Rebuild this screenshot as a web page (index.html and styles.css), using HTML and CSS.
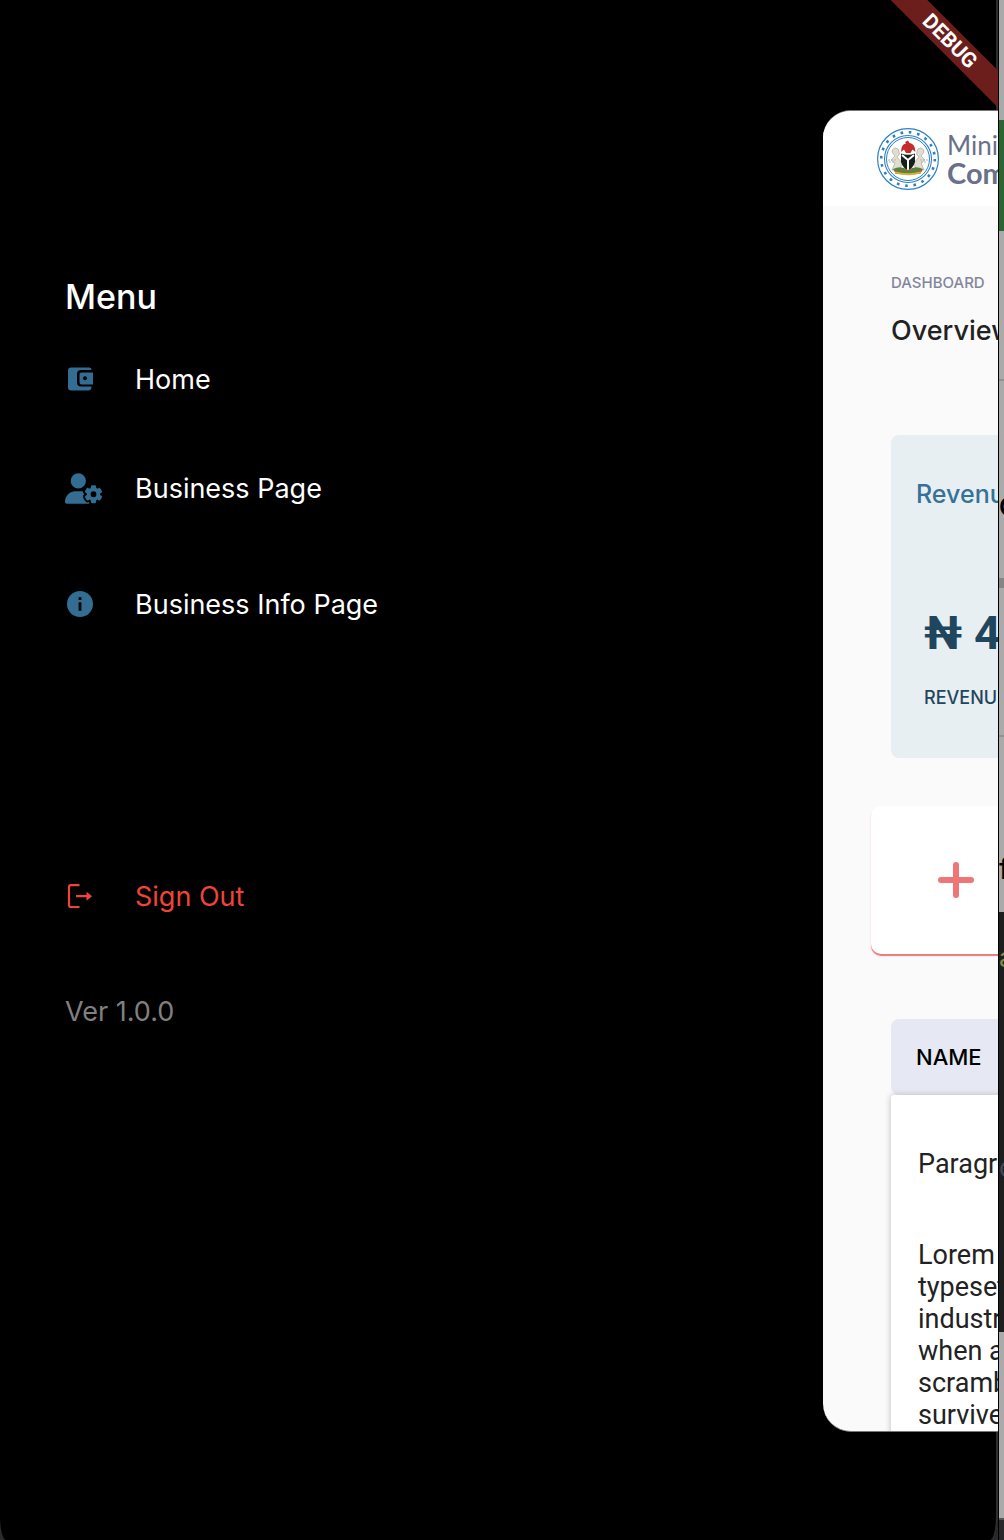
FILE: index.html
```html
<!DOCTYPE html>
<html lang="en">
<head>
<meta charset="utf-8">
<meta name="viewport" content="width=device-width, initial-scale=1">
<title>Menu</title>
<link rel="stylesheet" href="styles.css">
</head>
<body>
<div class="desktop">
  <div class="app">
    <aside class="drawer">
      <h1 class="drawer-title">Menu</h1>
      <nav class="menu">
        <a class="item" href="#home">
          <span class="icon"><svg width="30" height="30" viewBox="0 0 30 30"><path fill="currentColor" d="M6 3.500H24.500Q26.500 3.500 26.500 6H16Q12 6 12 10V18.500Q12 22.500 16 22.500H26.500Q26.500 26.500 23.500 26.500H6Q3 26.500 3 23.500V6.500Q3 3.500 6 3.500Z"/><path fill="currentColor" fill-rule="evenodd" d="M16.500 8.500H28V20.500H16.500Q14.500 20.500 14.500 18.500V10.500Q14.500 8.500 16.500 8.500ZM20 12.300a2 2 0 1 0 0.010 0Z"/></svg></span>
          <span>Home</span>
        </a>
        <a class="item" href="#business">
          <span class="icon"><svg width="38" height="31" viewBox="0 0 640 512"><path fill="currentColor" d="M224 0a128 128 0 1 1 0 256A128 128 0 1 1 224 0zM178.300 304h91.400c11.800 0 23.400 1.200 34.500 3.300c-2.100 18.500 7.400 35.600 21.800 44.800c-16.600 10.600-26.700 31.600-20 53.300c4 12.900 9.400 25.500 16.400 37.600s15.200 23.100 24.400 33c15.700 16.900 39.600 18.400 57.200 8.700v.9c0 9.200 2.700 18.500 7.900 26.300H29.700C13.300 512 0 498.700 0 482.300C0 383.800 79.800 304 178.300 304zM436 218.200c0-7 4.500-13.300 11.300-14.800c10.500-2.400 21.500-3.700 32.700-3.700s22.200 1.300 32.700 3.700c6.800 1.500 11.300 7.800 11.300 14.800v30.600c7.900 3.400 15.400 7.700 22.300 12.800l24.900-14.300c6.100-3.500 13.700-2.700 18.500 2.400c7.600 8.100 14.300 17.200 20.100 27.200s10.300 20.400 13.500 31c2.100 6.700-1.100 13.700-7.200 17.200l-25 14.400c.4 4 .7 8.100 .7 12.300s-.2 8.200-.7 12.300l25 14.400c6.100 3.500 9.200 10.500 7.200 17.200c-3.300 10.600-7.800 21-13.500 31s-12.500 19.100-20.100 27.200c-4.800 5.100-12.500 5.900-18.500 2.400l-24.900-14.300c-6.900 5.100-14.300 9.400-22.300 12.800l0 30.600c0 7-4.500 13.300-11.300 14.800c-10.500 2.400-21.500 3.700-32.700 3.700s-22.200-1.300-32.700-3.700c-6.800-1.500-11.300-7.800-11.300-14.800V454.800c-8-3.400-15.600-7.700-22.500-12.900l-24.700 14.300c-6.100 3.500-13.700 2.700-18.500-2.400c-7.600-8.100-14.300-17.200-20.100-27.200s-10.300-20.400-13.500-31c-2.100-6.700 1.100-13.700 7.200-17.200l24.800-14.300c-.4-4.100-.7-8.200-.7-12.400s.2-8.300 .7-12.400L343.800 325c-6.100-3.500-9.200-10.500-7.200-17.200c3.300-10.600 7.700-21 13.500-31s12.500-19.100 20.100-27.200c4.800-5.100 12.400-5.900 18.500-2.400l24.800 14.300c6.900-5.100 14.500-9.400 22.500-12.900V218.200zm92.100 133.500a48.100 48.100 0 1 0 -96.100 0 48.100 48.100 0 1 0 96.100 0z"/></svg></span>
          <span>Business Page</span>
        </a>
        <a class="item info" href="#business-info">
          <span class="icon"><svg width="30" height="30" viewBox="0 0 30 30"><circle cx="15" cy="15" r="13" fill="currentColor"/><path stroke="#000" stroke-width="2.800" d="M15 8.200v2.800M15 13.200v8.600"/></svg></span>
          <span>Business Info Page</span>
        </a>
      </nav>
      <button class="item signout" type="button">
        <span class="icon"><svg width="30" height="30" viewBox="0 0 30 30"><path fill="none" stroke="currentColor" stroke-width="2.200" d="M14.500 4.200H6Q4 4.200 4 6.200V24Q4 26 6 26H14.500M11 15.200H22.500"/><path fill="currentColor" d="M21.500 10.700L27 15.200L21.500 19.700Z"/></svg></span>
        <span>Sign Out</span>
      </button>
      <p class="version">Ver 1.0.0</p>
    </aside>

    <section class="preview">
      <header class="brand">
        <svg width="64" height="64" viewBox="0 0 64 64">
          <g fill="none" stroke="#2f80c2">
            <circle cx="32" cy="32" r="30.400" stroke-width="1.200"/>
            <circle cx="32" cy="32" r="26.800" stroke-width="2.600" stroke-dasharray="2.600 5.820"/>
            <circle cx="32" cy="32" r="23.500" stroke-width="1.100"/>
            <circle cx="32" cy="32" r="21.500" stroke-width="1"/>
          </g>
          <path fill="#c42c2b" d="M25 25Q25 17 30 16.500L29 15L32 13.500L33.500 16Q39 16.500 39.500 25L36.500 22.500L34.500 26H30L28 22.500Z"/>
          <path fill="#e0ded2" stroke="#aaa797" stroke-width=".7" d="M16 25Q17 19 22 22L23.500 27L21 30L26 36L24 43H16L19 36L15 33L19 29ZM48 25Q47 19 42 22L40.500 27L43 30L38 36L40 43H48L45 36L49 33L45 29Z"/>
          <path stroke="#b7b4a7" stroke-width="1" stroke-dasharray="2 1" d="M12 33H20M44 33H52M13 35H19M45 35H51"/>
          <path fill="#17211b" d="M25 26.500Q32 29 39 26.500V35Q37 41 32 44Q27 41 25 35Z"/>
          <path fill="none" stroke="#fff" stroke-width="2" d="M26 28L32 33L38 28M32 33V43"/>
          <path fill="#4d8a3d" d="M17 42Q25 38 32 43Q39 38 47 42L44 47H20Z"/>
          <path stroke="#d7493a" stroke-width="2" stroke-dasharray="2 3" d="M19 43.500H46"/>
          <path fill="none" stroke="#d6ad3b" stroke-width="2" d="M19 45.500Q32 49 45 45.500"/>
        </svg>
        <div class="brand-name"><span>Ministry of</span><strong>Communications</strong></div>
      </header>
      <main class="content">
        <p class="crumb">DASHBOARD</p>
        <h2 class="heading">Overview</h2>
        <article class="revenue">
          <h3 class="revenue-title">Revenue</h3>
          <p class="amount">₦ 400</p>
          <p class="caption">REVENUE</p>
        </article>
        <button class="add" type="button" aria-label="Add">
          <svg width="36" height="36" viewBox="0 0 36 36"><path stroke="#ee7676" stroke-width="6" stroke-linecap="round" d="M18 3V33M3 18H33"/></svg>
        </button>
        <table class="records">
          <thead><tr><th>NAME</th></tr></thead>
          <tbody><tr><td>
            <p>Paragraph</p>
            <p>Lorem ipsum<br>typesetting<br>industry<br>when an<br>scrambled<br>survived</p>
          </td></tr></tbody>
        </table>
      </main>
    </section>
    <div class="debug">DEBUG</div>
  </div>

  <div class="behind">
    <div class="pane sky"></div>
    <div class="pane green"></div>
    <div class="pane top"></div>
    <div class="pane query">C</div>
    <div class="pane divider"></div>
    <div class="pane mid"></div>
    <div class="pane label">f</div>
    <div class="pane code"><span class="olive">a</span><span class="slate">o</span></div>
    <div class="pane lower"></div>
    <div class="pane foot"></div>
  </div>
</div>
</body>
</html>
```

FILE: styles.css
```css
* { box-sizing: border-box; }
body {
  margin: 0;
  background: #2b2b2d;
  font-family: Inter, "Liberation Sans", sans-serif;
}
h1, h2, h3, p { margin: 0; font-weight: 500; }
a { color: inherit; text-decoration: none; }
button { border: 0; background: none; font: inherit; cursor: pointer; }
svg { display: block; flex: none; }

.desktop {
  display: grid;
  grid-template-columns: 1fr 6px;
  height: 100vh;
  min-height: 1200px;
}
.app {
  position: relative;
  display: grid;
  grid-template-columns: 1fr 175px;
  overflow: hidden;
  background: #000;
  box-shadow: inset -2px 0 #2e2e2e;
  border-radius: 0 0 6px 6px / 0 0 24px 24px;
}

/* Drawer */
.drawer { padding: 273px 24px 24px 65px; color: #fff; }
.drawer-title { margin-bottom: 34px; font-size: 34px; line-height: 48px; }
.menu { display: grid; gap: 61px; }
.item {
  display: flex;
  align-items: center;
  height: 48px;
  padding: 0;
  font-size: 27px;
}
.info { margin-top: 7px; }
.icon { width: 70px; color: #336d92; }
.signout { margin-top: 244px; color: #f04438; }
.signout .icon { color: inherit; }
.version { margin-top: 68px; color: #808080; font-size: 27px; line-height: 48px; font-weight: 400; }

/* Page tucked behind the drawer */
.preview {
  display: flex;
  flex-direction: column;
  min-width: 0;
  min-height: 0;
  margin: 110px 0 108px;
  overflow: hidden;
  border-top: 1px solid #777;
  border-bottom: 1px solid #777;
  border-radius: 28px 0 0 28px;
  background: #fafafa;
  white-space: nowrap;
}
.brand {
  display: flex;
  flex: none;
  align-items: center;
  gap: 7px;
  height: 95px;
  padding-left: 53px;
  background: #fff;
  color: #697089;
  font-family: Lato, sans-serif;
}
.brand-name { display: grid; font-size: 26px; line-height: 28px; }
.brand-name strong { font-size: 29px; }
.content { flex: none; padding: 65px 0 0 68px; }
.crumb { color: #83869a; font-size: 15px; line-height: 24px; }
.heading { margin-top: 16px; color: #222; font-size: 27px; line-height: 40px; }
.revenue {
  width: 400px;
  height: 323px;
  margin-top: 84px;
  padding: 43px 25px;
  border-radius: 8px;
  background: #e8eff3;
  color: #1f465c;
}
.revenue-title { color: #367297; font-size: 25px; line-height: 32px; }
.amount {
  margin: 95px 0 0 8px;
  font: 700 47px/56px Roboto, sans-serif;
}
.caption { margin: 25px 0 0 8px; font-size: 18px; line-height: 24px; }
.add {
  display: block;
  width: 400px;
  height: 148px;
  margin: 48px 0 0 -20px;
  padding: 0 0 0 67px;
  border-radius: 10px;
  background: #fff;
  box-shadow: 0 2px 1px #ee7676;
}
.records {
  width: 400px;
  margin-top: 65px;
  border-collapse: collapse;
  color: #222;
}
.records th {
  height: 76px;
  padding: 0 25px;
  border-radius: 8px;
  background: #e6e9f3;
  color: #000;
  font-size: 22px;
  font-weight: 500;
  text-align: left;
}
.records td {
  padding: 53px 27px;
  border-radius: 3px;
  background: #fff;
  box-shadow: 0 0 6px #bbb;
  font: 27px/32px Roboto, sans-serif;
}
.records td p { font-weight: 400; }
.records td p + p { margin-top: 59px; }

/* Corner ribbon */
.debug {
  position: absolute;
  top: 28px;
  right: -52px;
  width: 200px;
  transform: rotate(45deg);
  background: #6b1e1b;
  color: #fff;
  font: 700 21px/26px Roboto, sans-serif;
  text-align: center;
}

/* Sliver of the window behind */
.behind {
  display: flex;
  flex-direction: column;
  overflow: hidden;
  border-left: 1px solid #000;
  background: #aaa;
}
.pane { flex: none; overflow: hidden; }
.sky { height: 120px; background: #a9a9a9; }
.green { height: 111px; background: #2b6531; }
.top { height: 150px; border-bottom: 2px solid #919191; }
.query { height: 197px; padding-top: 110px; font-size: 26px; line-height: 32px; font-weight: 600; }
.divider { height: 10px; background: #858585; }
.mid { height: 149px; border-bottom: 2px solid #919191; }
.label { height: 175px; padding-top: 116px; font-size: 28px; line-height: 32px; font-weight: 500; }
.code {
  display: grid;
  align-content: start;
  gap: 178px;
  height: 420px;
  padding-top: 30px;
  background: #1d1f1e;
  font-size: 26px;
  line-height: 32px;
}
.olive { color: #7f8c4c; }
.slate { color: #43465a; }
.lower { height: 186px; }
.foot { flex: 1; border-top: 2px solid #555; background: #28282b; }
```
